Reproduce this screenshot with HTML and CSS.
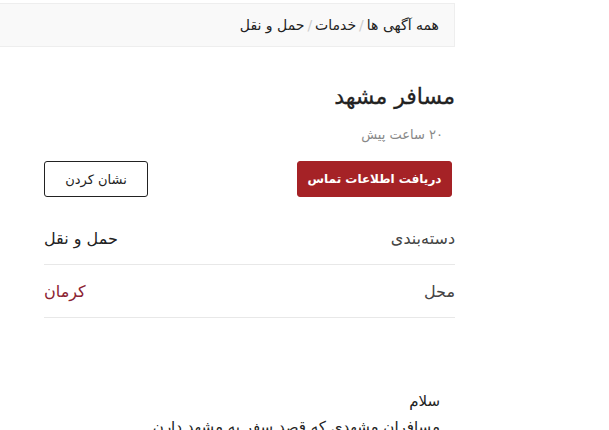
FILE: index.html
```html
<!DOCTYPE html>
<html lang="fa" dir="rtl">
<head>
<meta charset="utf-8">
<title>مسافر مشهد</title>
<link rel="stylesheet" href="styles.css">
</head>
<body>
<div class="page">
  <nav class="crumbs">
    <a href="#">همه آگهی ها</a><span class="sep">/</span><a href="#">خدمات</a><span class="sep">/</span><a href="#">حمل و نقل</a>
  </nav>
  <main class="content">
    <h1 class="title">مسافر مشهد</h1>
    <div class="time">۲۰ ساعت پیش</div>
    <div class="actions">
      <button class="btn btn-primary">دریافت اطلاعات تماس</button>
      <button class="btn btn-outline">نشان کردن</button>
    </div>
    <div class="rows">
      <div class="row"><span class="label">دسته‌بندی</span><span class="value">حمل و نقل</span></div>
      <div class="row"><span class="label">محل</span><span class="value link">کرمان</span></div>
    </div>
    <div class="desc">
      <p>سلام</p>
      <p>مسافران مشهدی که قصد سفر به مشهد دارن</p>
    </div>
  </main>
</div>
</body>
</html>
```
FILE: styles.css
```css
html, body {
  margin: 0;
  padding: 0;
  background: #fff;
}
body {
  font-family: "DejaVu Sans", sans-serif;
  color: #222;
  overflow: hidden;
  height: 430px;
}
.page {
  width: 455px;
  margin-left: 0;
  margin-right: auto;
  padding-top: 3px;
}
.crumbs {
  background: #f9f9f9;
  border: 1px solid #eee;
  border-left: 0;
  height: 42px;
  display: flex;
  align-items: center;
  padding-right: 15px;
  font-size: 14px;
}
.crumbs a {
  color: #222;
  text-decoration: none;
}
.crumbs .sep {
  color: #ccc;
  padding: 0 3px;
}
.content {
  padding-left: 44px;
}
.title {
  margin: 35px 0 0;
  font-size: 22px;
  font-weight: normal;
  line-height: 30px;
  -webkit-text-stroke: 0.3px #222;
}
.time {
  margin-top: 14px;
  padding-right: 12px;
  color: #888;
  font-size: 13px;
  line-height: 18px;
}
.actions {
  display: flex;
  justify-content: space-between;
  margin-top: 17px;
  padding-right: 3px;
}
.btn {
  height: 36px;
  font-family: inherit;
  font-size: 13px;
  border-radius: 3px;
  padding: 0;
  white-space: nowrap;
  cursor: pointer;
}
.btn-primary {
  background: #a52226;
  color: #fff;
  border: 1px solid #a52226;
  font-weight: bold;
  font-size: 12px;
  width: 155px;
}
.btn-outline {
  background: #fff;
  color: #222;
  border: 1px solid #222;
  width: 104px;
}
.rows {
  margin-top: 15px;
}
.row {
  display: flex;
  justify-content: space-between;
  align-items: center;
  height: 52px;
  border-bottom: 1px solid #e8e8e8;
  font-size: 16px;
}
.label {
  color: #444;
}
.value.link {
  color: #8b2332;
}
.desc {
  margin-top: 70px;
  padding-right: 15px;
  font-size: 15px;
}
.desc p {
  margin: 0;
  line-height: 26px;
}
```
